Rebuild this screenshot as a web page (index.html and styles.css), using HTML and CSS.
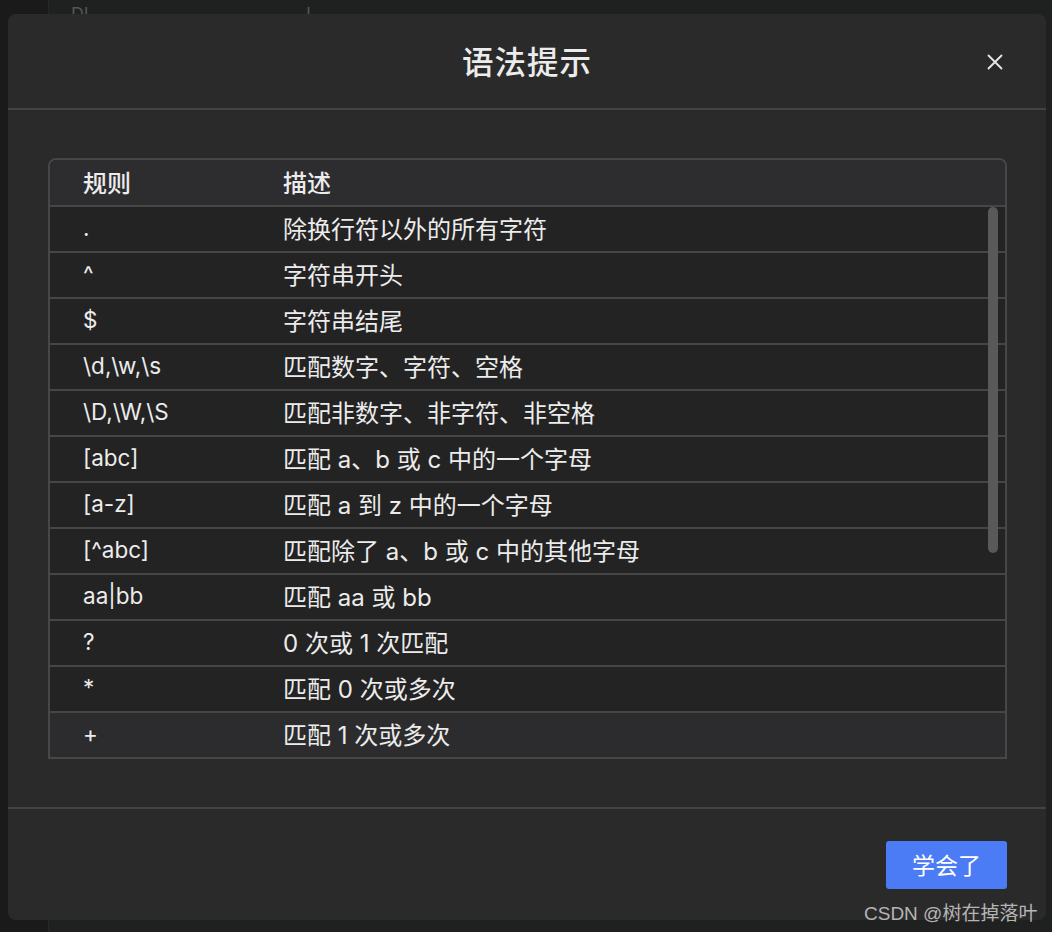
FILE: index.html
```html
<!DOCTYPE html>
<html lang="zh-CN">
<head>
<meta charset="utf-8">
<title>语法提示</title>
<link rel="stylesheet" href="styles.css">
</head>
<body>
<div class="page">
  <aside class="sidebar"></aside>
  <main class="main">
    <div class="bg-text">Dl&nbsp;&nbsp;&nbsp;&nbsp;&nbsp;&nbsp;&nbsp;&nbsp;&nbsp;&nbsp;&nbsp;&nbsp;&nbsp;&nbsp;&nbsp;&nbsp;&nbsp;&nbsp;.&nbsp;&nbsp;&nbsp;&nbsp;&nbsp;&nbsp;&nbsp;&nbsp;&nbsp;&nbsp;&nbsp;&nbsp;&nbsp;&nbsp;&nbsp;&nbsp;&nbsp;&nbsp;&nbsp;&nbsp;&nbsp;&nbsp;&nbsp;&nbsp;l</div>
  </main>
</div>

<div class="modal">
  <header class="modal-header">
    <h1 class="modal-title">语法提示</h1>
    <button class="close-btn" aria-label="关闭">
      <svg width="16" height="16" viewBox="0 0 16 16"><path d="M1.5 1.5 L14.5 14.5 M14.5 1.5 L1.5 14.5" stroke="#e8e8e8" stroke-width="1.8" stroke-linecap="round" fill="none"/></svg>
    </button>
  </header>
  <section class="modal-body">
    <div class="table">
      <div class="row head"><div class="c1">规则</div><div class="c2">描述</div></div>
      <div class="rows">
        <div class="row"><div class="c1">.</div><div class="c2">除换行符以外的所有字符</div></div>
        <div class="row"><div class="c1">^</div><div class="c2">字符串开头</div></div>
        <div class="row"><div class="c1">$</div><div class="c2">字符串结尾</div></div>
        <div class="row"><div class="c1">\d,\w,\s</div><div class="c2">匹配数字、字符、空格</div></div>
        <div class="row"><div class="c1">\D,\W,\S</div><div class="c2">匹配非数字、非字符、非空格</div></div>
        <div class="row"><div class="c1">[abc]</div><div class="c2">匹配 a、b 或 c 中的一个字母</div></div>
        <div class="row"><div class="c1">[a-z]</div><div class="c2">匹配 a 到 z 中的一个字母</div></div>
        <div class="row"><div class="c1">[^abc]</div><div class="c2">匹配除了 a、b 或 c 中的其他字母</div></div>
        <div class="row"><div class="c1">aa|bb</div><div class="c2">匹配 aa 或 bb</div></div>
        <div class="row"><div class="c1">?</div><div class="c2">0 次或 1 次匹配</div></div>
        <div class="row"><div class="c1">*</div><div class="c2">匹配 0 次或多次</div></div>
        <div class="row hover"><div class="c1">+</div><div class="c2">匹配 1 次或多次</div></div>
      </div>
      <div class="thumb"></div>
    </div>
  </section>
  <footer class="modal-footer">
    <button class="ok-btn">学会了</button>
  </footer>
</div>
<div class="watermark">CSDN @树在掉落叶</div>
</body>
</html>
```
FILE: styles.css
```css
html, body {
  margin: 0;
  padding: 0;
  width: 1052px;
  height: 932px;
  overflow: hidden;
  background: #1f2020;
  font-family: "Inter", "Noto Sans CJK SC", sans-serif;
}
.page {
  display: flex;
  height: 932px;
}
.sidebar {
  width: 48px;
  background: #1a1a1a;
  border-right: 1px solid #262626;
}
.main {
  flex: 1;
  background: #1f2020;
}
.bg-text {
  padding: 4px 0 0 22px;
  color: #555;
  font-size: 18px;
}
.modal {
  position: absolute;
  left: 8px;
  top: 14px;
  width: 1038px;
  height: 906px;
  background: #2a2a2a;
  border-radius: 8px;
  display: flex;
  flex-direction: column;
  color: #e8e8e8;
}
.modal-header {
  height: 94px;
  border-bottom: 2px solid #434343;
  display: flex;
  align-items: center;
  justify-content: center;
  position: relative;
}
.modal-title {
  margin: 0;
  font-family: "Noto Sans CJK SC", sans-serif;
  font-size: 31.5px;
  font-weight: 500;
  color: #ececec;
  letter-spacing: 1px;
  padding-bottom: 2px;
}
.close-btn {
  position: absolute;
  right: 43px;
  top: 40px;
  width: 16px;
  height: 16px;
  padding: 0;
  border: 0;
  background: none;
  display: flex;
}
.modal-body {
  padding: 48px 39px 48px 40px;
  border-bottom: 2px solid #434343;
}
.table {
  position: relative;
  border: 2px solid #474747;
  border-radius: 8px 8px 0 0;
  overflow: hidden;
  background: #232323;
}
.row {
  display: flex;
  align-items: center;
  height: 44px;
  border-top: 2px solid #464646;
  color: #ececec;
}
.row .c1 {
  font-size: 22.5px;
  padding-bottom: 4px;
}
.row .c2 {
  font-size: 24px;
  padding-bottom: 4px;
}
.row.head {
  border-top: 0;
  height: 45px;
  background: #2d2d30;
  font-weight: 500;
}
.row.head .c1 {
  font-size: 24px;
  padding-bottom: 2px;
}
.row.head .c2 {
  padding-bottom: 2px;
}
.row.hover {
  background: #2c2c2e;
}
.c1 {
  width: 233px;
  padding-left: 33px;
  box-sizing: border-box;
}
.c2 {
  flex: 1;
}
.thumb {
  position: absolute;
  right: 7px;
  top: 47px;
  width: 10px;
  height: 346px;
  border-radius: 5px;
  background: #595959;
}
.modal-footer {
  flex: 1;
  display: flex;
  justify-content: flex-end;
  align-items: flex-start;
  padding: 32px 39px 0 0;
}
.ok-btn {
  width: 121px;
  height: 48px;
  border: 0;
  border-radius: 3px;
  background: #4b7cf5;
  color: #fff;
  font-family: "Noto Sans CJK SC", sans-serif;
  font-size: 23px;
  padding: 0 0 2px 0;
}
.watermark {
  position: absolute;
  left: 864px;
  top: 898px;
  font-family: "Liberation Sans", "Noto Sans CJK SC", sans-serif;
  font-size: 19px;
  color: #b5b5b5;
}
```
